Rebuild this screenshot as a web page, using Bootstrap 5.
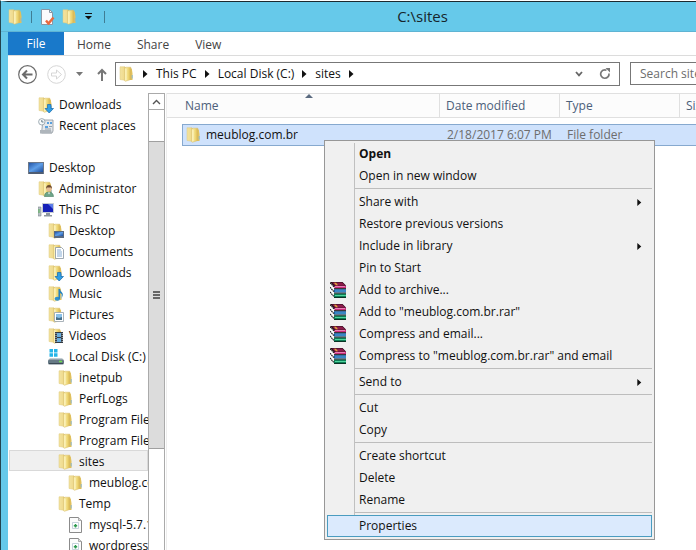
<!DOCTYPE html>
<html lang="en">
<head>
<meta charset="utf-8">
<meta name="viewport" content="width=device-width, initial-scale=1">
<title>C:\sites</title>
<link href="https://cdn.jsdelivr.net/npm/bootstrap@5.3.0/dist/css/bootstrap.min.css" rel="stylesheet">
<style>
  body { font-family: "Open Sans", "Noto Sans", sans-serif; font-size: 12px; line-height: 20px; color: #111; background: #fff; }
  a { color: inherit; text-decoration: none; }
  svg { flex: none; display: block; }
  .explorer { border-top: 1px solid #fff; border-left: 1px solid #23444f; }
  .frame { border-top: 1px solid #1d2a30; border-left: 7px solid #66c9ea; min-height: 0; }
  .titlebar { height: 30px; background: #66c9ea; border-bottom: 1px solid #5fb4d3; margin-left: -7px; padding-left: 7px; }
  .titlebar h1 { font-size: 15px; line-height: 28px; padding-left: 44px; color: #16252b; }
  .qa { height: 29px; width: 97px; gap: 7px; }
  .qa button, .plain { border: 0; background: none; padding: 0; }
  .vbar { width: 1px; height: 12px; background: #3f7d94; }
  .ribbon { height: 24px; border-bottom: 1px solid #dcdcdc; color: #444; }
  .ribbon a { padding: 3px 13px 0; }
  .ribbon .file-tab { background: #1979ca; color: #fff; width: 56px; padding: 2px 0 0; text-align: center; }
  .addr-row { height: 37px; padding: 6px 0 7px 10px; }
  .nav-buttons { gap: 10px; }
  .crumbs { border: 1px solid #777; height: 24px; color: #111; padding-left: 3px; }
  .search-box { border: 1px solid #777; border-right: 0; width: 66px; height: 23px; padding: 0 0 0 9px; margin-left: 10px; color: #6d6d6d; border-radius: 0; outline: 0; }
  .search-box::placeholder { color: #6d6d6d; }
  .side { width: 140px; overflow: hidden; }
  .side a { height: 21px; gap: 5px; white-space: nowrap; border: 1px solid transparent; margin-left: 1px; padding-top: 2px; }
  .side .gap-row { height: 21px; }
  .lv1 { padding-left: 18px; } .lv2 { padding-left: 28px; } .lv3 { padding-left: 38px; }
  .lv4 { padding-left: 48px; } .lv5 { padding-left: 58px; }
  .side a.current { background: #f0f0f0; border-color: #d9d9d9; }
  .scroller { width: 17px; border-left: 1px solid #aaa; border-right: 1px solid #aaa; }
  .scroller button { height: 17px; border: solid #aaa; border-width: 1px 0; background: #fff; padding: 0; }
  .track-top { flex: 7 0 0; } .track-end { flex: 23 0 0; }
  .thumb { flex: 70 0 0; background: #dcdcdc; border: solid #a0a0a0; border-width: 1px 0; }
  .files-pane { border-left: 1px solid #ededed; margin-left: 1px; }
  .files { table-layout: fixed; width: 610px; border-collapse: separate; border-spacing: 0; }
  .files th { font-weight: 400; color: #4c607a; height: 25px; padding: 1px 6px 0; border: solid #e0e0e0; border-width: 1px 1px 1px 0; background: #fcfcfc; }
  .files th:first-child { padding-left: 18px; }
  .files tbody::before { content: ""; display: block; height: 6px; }
  .files td { height: 22px; padding: 0 7px; color: #6d6d6d; line-height: 20px; white-space: nowrap; }
  .files td.chosen { background: #cfe2fc; border: solid #86a9cf; border-width: 1px 0; }
  .files td.name { border-left-width: 1px; color: #111; padding-left: 3px; }
  .c-pad { width: 15px; } .c-name { width: 258px; } .c-col { width: 120px; }
  .sort { position: absolute; left: 138px; top: 1px; }
  .ctx { position: absolute; left: 324px; top: 140px; width: 331px; background: #f0f0f0; border: 1px solid #979797; padding: 2px; }
  .ctx ul { background: linear-gradient(#c0c0c0, #c0c0c0) 27px 0 / 1px 100% no-repeat; }
  .ctx a { height: 22px; padding-right: 9px; border: 1px solid transparent; color: #111; }
  .ctx .slot { width: 31px; padding-left: 2px; flex: none; }
  .ctx .rule { height: 4px; margin-left: 28px; background: linear-gradient(#bdbdbd, #bdbdbd) 0 1px / 100% 1px no-repeat; }
  .ctx a.hot { background: #dbeafd; border-color: #4a9cc0; }
</style>
</head>
<body class="vh-100 overflow-hidden position-relative">
<svg width="0" height="0" class="position-absolute" aria-hidden="true">
  <defs>
    <linearGradient id="ga" x1="0" x2="1"><stop offset="0" stop-color="#f3e3a0"/><stop offset=".6" stop-color="#f0dc90"/><stop offset="1" stop-color="#cfb052"/></linearGradient>
    <linearGradient id="gb" x1="0" x2="1"><stop offset="0" stop-color="#fbf2b8"/><stop offset=".6" stop-color="#efd877"/><stop offset="1" stop-color="#d9b54e"/></linearGradient>
    <linearGradient id="gc" x1="0" x2="1" y2="1"><stop offset="0" stop-color="#2456a8"/><stop offset=".5" stop-color="#5f9fe8"/><stop offset="1" stop-color="#1c4c9c"/></linearGradient>
    <symbol id="folder" viewBox="0 0 16 16">
      <path d="M1 .8h5l1 1V14.500L1 13.500z" fill="url(#ga)" stroke="#dfc97e" stroke-width=".5"/>
      <path d="M11 2.500h1.800l.7 5V14h-3z" fill="#e2c15c"/>
      <path d="M5.500 2.200l1.700-1H11.800V13.500L6.500 15.300l-1-.6z" fill="url(#gb)" stroke="#d9bd68" stroke-width=".5"/>
      <path d="M7 3v11" stroke="#fff6c8" stroke-width=".8"/>
      <path d="M13.200 9v3.500" stroke="#8fb8cc" stroke-width="1"/>
    </symbol>
    <symbol id="down" viewBox="0 0 16 16"><use href="#folder"/><path d="M9.500 7.500h3.500v4h2.500L11.200 16 7 11.500h2.500z" fill="#2f9fe6" stroke="#1769ae" stroke-width=".7"/></symbol>
    <symbol id="recent" viewBox="0 0 16 16"><path d="M5 2h10v11l-1 2H3.500z" fill="#e4e8ec" stroke="#8a939b" stroke-width=".8"/><path d="M2 12h11l1 3.500H2z" fill="#aeb5bb"/><path d="M9 4h2v2H9zM12 4h2v2h-2zM7 8h3v2H7z" fill="#58a0de"/><path d="M11 8.500h3M7 11h6" stroke="#7d8f9e" stroke-width=".8"/><circle cx="3.800" cy="3.800" r="3.200" fill="#f7fafb" stroke="#8b9aa3" stroke-width=".8"/><path d="M3.800 2v2h1.700" stroke="#46606e" stroke-width=".8" fill="none"/></symbol>
    <symbol id="desktop" viewBox="0 0 16 16"><path d="M0 2h16v12H0z" fill="#6b7788"/><path d="M1 3h14v9H1z" fill="url(#gc)"/><path d="M1 12.500h14v1H1z" fill="#34455e"/></symbol>
    <symbol id="user" viewBox="0 0 16 16"><use href="#folder"/><path d="M6.500 15.500q0-4.500 4.300-4.500t4.700 4.500z" fill="#6ea58a" stroke="#487d62" stroke-width=".6"/><circle cx="11" cy="7.800" r="2.700" fill="#e5bb94"/><path d="M8 8q0-4 3-4t3 4l-1-1.500H9z" fill="#6c4a30"/><path d="M10 11.500l1 2 1-2z" fill="#fff"/></symbol>
    <symbol id="pc" viewBox="0 0 16 16"><path d="M0 5h3v9H0z" fill="#b9c1c6" stroke="#78838a" stroke-width=".6"/><path d="M1 7v4" stroke="#52b052"/><path d="M4 1h12v10H4z" fill="#c6ccd4"/><path d="M5 2h10v8H5z" fill="#1620b8"/><path d="M10 2h5v5z" fill="#5c7ce8"/><path d="M8 11h4v2h2v1.500H6V13h2z" fill="#8e979f"/></symbol>
    <symbol id="fdesk" viewBox="0 0 16 16"><use href="#folder"/><path d="M6 8h10v7H6z" fill="#5a6a80"/><path d="M7 9h8v4H7z" fill="url(#gc)"/></symbol>
    <symbol id="fdoc" viewBox="0 0 16 16"><use href="#folder"/><path d="M7.500 3.500h6l2 2v9h-8z" fill="#fff" stroke="#8793a0" stroke-width=".8"/><path d="M9 6h4M9 8h5M9 10h5M9 12h5" stroke="#6798c9" stroke-width=".8"/></symbol>
    <symbol id="fmus" viewBox="0 0 16 16"><use href="#folder"/><ellipse cx="9.300" cy="12.800" rx="2.700" ry="2" fill="#2f91cf"/><path d="M10.500 3h1.500q.3 2 2 3.500t0 5q.7-3.500-2-4.500v6h-1.500z" fill="#2382c3"/></symbol>
    <symbol id="fpic" viewBox="0 0 16 16"><use href="#folder"/><path d="M6.500 5.500h9v9h-9z" fill="#fff" stroke="#94a0a8" stroke-width=".8"/><path d="M8 7h6v6H8z" fill="#89c1ea"/><path d="M8 10l3 1 3-1v3H8z" fill="#47718c"/></symbol>
    <symbol id="fvid" viewBox="0 0 16 16"><use href="#folder"/><path d="M7 4h8v11H7z" fill="#333c45"/><path d="M9 5h4v4H9zM9 10h4v4H9z" fill="#69aede"/><path d="M8 5v10M14.200 5v10" stroke="#e5e5e5" stroke-width=".9" stroke-dasharray="1 1"/></symbol>
    <symbol id="disk" viewBox="0 0 16 16"><path d="M1.500 0h3.500v3.500H1.500zM6 0h3.500v3.500H6zM1.500 4.300h3.500v3.500H1.500zM6 4.300h3.500v3.500H6z" fill="#25b5e8"/><path d="M2 9h12l2 2H0z" fill="#c3cdd2"/><rect y="10.500" width="16" height="5" rx="1.500" fill="#667985"/><path d="M1 14.500h14" stroke="#3b4a54"/><path d="M11 12.500h3" stroke="#6ee04d" stroke-width="1.500"/></symbol>
    <symbol id="filei" viewBox="0 0 16 16"><path d="M1.500.5h9l3 3v12h-12z" fill="#fcfcfc" stroke="#8b8b8b"/><path d="M10.500.5v3h3" fill="#ddd" stroke="#999" stroke-width=".8"/><path d="M4.500 5.500h6v6h-6z" fill="#fff" stroke="#b7c8d4" stroke-width=".8"/><path d="M7.500 7v3.400M5.800 8.700h3.400" stroke="#2d9a4f" stroke-width="1.500"/></symbol>
    <symbol id="rar" viewBox="0 0 16 16">
      <path d="M0 1l3.500 4.500V16L0 12z" fill="#fff"/>
      <path d="M0 .8l4 4M0 5.200l4 4.600M0 10l4 4.800" stroke="#222" stroke-width="1.200" stroke-dasharray="1.600 .5"/>
      <path d="M0 0h12.500L16 3.500v1L4.500 5z" fill="#2a0a18"/>
      <path d="M2 .5h10L15.500 3.600H5z" fill="#8c1b4b"/><path d="M4 .8h2l2 2.400H6z" fill="#e3a637"/>
      <path d="M4.500 3.800H16v2.400H4.500z" fill="#c92c7b"/><path d="M5 4.500h10" stroke="#f3a3cd" stroke-width=".7"/>
      <path d="M4 6.200h12v1H4z" fill="#111"/>
      <path d="M4 7.200h12v3.300H4z" fill="#175aa0"/><path d="M5 9h11" stroke="#5db4e8" stroke-width="1"/>
      <path d="M4 10.700h12v1H4z" fill="#111"/>
      <path d="M4 11.700h12V15H4z" fill="#0d7c55"/><path d="M5 13.500h11" stroke="#4fd49d" stroke-width="1"/>
      <path d="M4 15h12v1H4z" fill="#0b3325"/>
    </symbol>
    <symbol id="tri" viewBox="0 0 5 8"><path d="M0 0l4.500 4L0 8z" fill="#111"/></symbol>
  </defs>
</svg>

<main class="explorer h-100">
<div class="frame h-100 d-flex flex-column">
  <header class="titlebar d-flex">
    <div class="qa d-flex align-items-center">
      <svg width="16" height="16"><use href="#folder"/></svg>
      <span class="vbar"></span>
      <button aria-label="Properties"><svg width="16" height="16" viewBox="0 0 16 16"><path d="M2.500.5h8l3 3v12h-11z" fill="#fbfbfd" stroke="#8a97a5"/><path d="M10.500.5v3h3" fill="none" stroke="#8a97a5"/><path d="M7 11.500l2.500 3 5-6" fill="none" stroke="#e8693f" stroke-width="2.500"/></svg></button>
      <button aria-label="New folder"><svg width="16" height="16"><use href="#folder"/></svg></button>
      <button aria-label="Customize toolbar"><svg width="7" height="7" viewBox="0 0 7 7"><path d="M0 .5h7" stroke="#111"/><path d="M0 3h7L3.500 6.500z" fill="#111"/></svg></button>
      <span class="vbar ms-auto"></span>
    </div>
    <h1 class="flex-grow-1 text-center fw-normal m-0">C:\sites</h1>
  </header>

  <nav class="ribbon d-flex" aria-label="Ribbon">
    <a href="#" class="file-tab">File</a><a href="#">Home</a><a href="#">Share</a><a href="#">View</a>
  </nav>

  <div class="addr-row d-flex align-items-start">
    <div class="nav-buttons d-flex align-items-center h-100">
      <button class="plain" aria-label="Back"><svg width="19" height="19" viewBox="0 0 19 19" fill="none" stroke="#6b6b6b"><circle cx="9.500" cy="9.500" r="8.800" stroke-width="1.200"/><path d="M14.500 9.500H5M9 5.500L5 9.500l4 4" stroke-width="2"/></svg></button>
      <button class="plain" aria-label="Forward"><svg width="19" height="19" viewBox="0 0 19 19" fill="none" stroke="#d6d6d6"><circle cx="9.500" cy="9.500" r="8.800"/><path d="M4.500 8h5V5l5 4.500-5 4.500v-3h-5z"/></svg></button>
      <button class="plain" aria-label="Recent locations"><svg width="7" height="4" viewBox="0 0 7 4"><path d="M0 0h7L3.500 4z" fill="#777"/></svg></button>
      <button class="plain ms-1" aria-label="Up"><svg width="10" height="13" viewBox="0 0 10 13" fill="none" stroke="#777" stroke-width="2"><path d="M5 13V2M1 6l4-4 4 4"/></svg></button>
    </div>
    <div class="crumbs flex-grow-1 d-flex align-items-center ms-2">
      <svg width="16" height="16"><use href="#folder"/></svg>
      <svg class="ms-2 me-2" width="5" height="8"><use href="#tri"/></svg>
      <a href="#">This PC</a>
      <svg class="ms-2 me-2" width="5" height="8"><use href="#tri"/></svg>
      <a href="#">Local Disk (C:)</a>
      <svg class="ms-2 me-2" width="5" height="8"><use href="#tri"/></svg>
      <a href="#">sites</a>
      <svg class="ms-2" width="5" height="8"><use href="#tri"/></svg>
      <button class="plain ms-auto" aria-label="Previous locations"><svg width="8" height="6" viewBox="0 0 8 6"><path d="M1 1l3 3.300L7 1" fill="none" stroke="#666" stroke-width="1.800"/></svg></button>
      <button class="plain ms-3 me-1" aria-label="Refresh"><svg class="me-1" width="12" height="12" viewBox="0 0 12 12"><path d="M7.500 2.200A4.200 4.200 0 1 0 10 5.500" fill="none" stroke="#777" stroke-width="1.700"/><path d="M6.500 0h4.500v4.500z" fill="#777"/></svg></button>
    </div>
    <input class="search-box" type="text" aria-label="Search sites" placeholder="Search sites">
  </div>

  <div class="d-flex flex-grow-1 overflow-hidden">
    <nav class="side flex-shrink-0" aria-label="Folders">
      <a href="#" class="d-flex align-items-center lv2"><svg width="16" height="16"><use href="#down"/></svg>Downloads</a>
      <a href="#" class="d-flex align-items-center lv2"><svg width="16" height="16"><use href="#recent"/></svg>Recent places</a>
      <div class="gap-row"></div>
      <a href="#" class="d-flex align-items-center lv1"><svg width="16" height="16"><use href="#desktop"/></svg>Desktop</a>
      <a href="#" class="d-flex align-items-center lv2"><svg width="16" height="16"><use href="#user"/></svg>Administrator</a>
      <a href="#" class="d-flex align-items-center lv2"><svg width="16" height="16"><use href="#pc"/></svg>This PC</a>
      <a href="#" class="d-flex align-items-center lv3"><svg width="16" height="16"><use href="#fdesk"/></svg>Desktop</a>
      <a href="#" class="d-flex align-items-center lv3"><svg width="16" height="16"><use href="#fdoc"/></svg>Documents</a>
      <a href="#" class="d-flex align-items-center lv3"><svg width="16" height="16"><use href="#down"/></svg>Downloads</a>
      <a href="#" class="d-flex align-items-center lv3"><svg width="16" height="16"><use href="#fmus"/></svg>Music</a>
      <a href="#" class="d-flex align-items-center lv3"><svg width="16" height="16"><use href="#fpic"/></svg>Pictures</a>
      <a href="#" class="d-flex align-items-center lv3"><svg width="16" height="16"><use href="#fvid"/></svg>Videos</a>
      <a href="#" class="d-flex align-items-center lv3"><svg width="16" height="16"><use href="#disk"/></svg>Local Disk (C:)</a>
      <a href="#" class="d-flex align-items-center lv4"><svg width="16" height="16"><use href="#folder"/></svg>inetpub</a>
      <a href="#" class="d-flex align-items-center lv4"><svg width="16" height="16"><use href="#folder"/></svg>PerfLogs</a>
      <a href="#" class="d-flex align-items-center lv4"><svg width="16" height="16"><use href="#folder"/></svg>Program Files</a>
      <a href="#" class="d-flex align-items-center lv4"><svg width="16" height="16"><use href="#folder"/></svg>Program Files</a>
      <a href="#" class="d-flex align-items-center lv4 current"><svg width="16" height="16"><use href="#folder"/></svg>sites</a>
      <a href="#" class="d-flex align-items-center lv5"><svg width="16" height="16"><use href="#folder"/></svg>meublog.com</a>
      <a href="#" class="d-flex align-items-center lv4"><svg width="16" height="16"><use href="#folder"/></svg>Temp</a>
      <a href="#" class="d-flex align-items-center lv5"><svg width="16" height="16"><use href="#filei"/></svg>mysql-5.7.1</a>
      <a href="#" class="d-flex align-items-center lv5"><svg width="16" height="16"><use href="#filei"/></svg>wordpress-</a>
    </nav>
    <div class="scroller d-flex flex-column flex-shrink-0">
      <button aria-label="Scroll up"><svg class="mx-auto" width="9" height="6" viewBox="0 0 9 6"><path d="M1 5l3.500-3.500L8 5" fill="none" stroke="#555" stroke-width="1.400"/></svg></button>
      <div class="track-top"></div>
      <div class="thumb d-flex align-items-center justify-content-center"><svg width="7" height="8" viewBox="0 0 7 8"><path d="M0 1h7M0 4h7M0 7h7" stroke="#666" stroke-width="2"/></svg></div>
      <div class="track-end"></div>
    </div>
    <section class="files-pane flex-grow-1 overflow-hidden position-relative">
      <svg class="sort" width="8" height="4" viewBox="0 0 8 4"><path d="M0 4l4-4 4 4z" fill="#5b6b80"/></svg>
      <table class="files">
        <colgroup><col class="c-pad"><col class="c-name"><col class="c-col"><col class="c-col"><col></colgroup>
        <thead><tr><th colspan="2">Name</th><th>Date modified</th><th>Type</th><th>Size</th></tr></thead>
        <tbody><tr>
          <td class="p-0"></td>
          <td class="chosen name"><span class="d-flex align-items-center gap-1"><svg width="16" height="16"><use href="#folder"/></svg>meublog.com.br</span></td>
          <td class="chosen">2/18/2017 6:07 PM</td><td class="chosen">File folder</td><td class="chosen"></td>
        </tr></tbody>
      </table>
    </section>
  </div>
</div>
</main>

<div class="ctx">
  <ul class="list-unstyled m-0">
    <li><a href="#" class="d-flex align-items-center fw-bold"><span class="slot"></span>Open</a></li>
    <li><a href="#" class="d-flex align-items-center"><span class="slot"></span>Open in new window</a></li>
    <li class="rule"></li>
    <li><a href="#" class="d-flex align-items-center"><span class="slot"></span>Share with<svg class="ms-auto" width="5" height="7"><use href="#tri"/></svg></a></li>
    <li><a href="#" class="d-flex align-items-center"><span class="slot"></span>Restore previous versions</a></li>
    <li><a href="#" class="d-flex align-items-center"><span class="slot"></span>Include in library<svg class="ms-auto" width="5" height="7"><use href="#tri"/></svg></a></li>
    <li><a href="#" class="d-flex align-items-center"><span class="slot"></span>Pin to Start</a></li>
    <li><a href="#" class="d-flex align-items-center"><span class="slot"><svg width="16" height="16"><use href="#rar"/></svg></span>Add to archive...</a></li>
    <li><a href="#" class="d-flex align-items-center"><span class="slot"><svg width="16" height="16"><use href="#rar"/></svg></span>Add to "meublog.com.br.rar"</a></li>
    <li><a href="#" class="d-flex align-items-center"><span class="slot"><svg width="16" height="16"><use href="#rar"/></svg></span>Compress and email...</a></li>
    <li><a href="#" class="d-flex align-items-center"><span class="slot"><svg width="16" height="16"><use href="#rar"/></svg></span>Compress to "meublog.com.br.rar" and email</a></li>
    <li class="rule"></li>
    <li><a href="#" class="d-flex align-items-center"><span class="slot"></span>Send to<svg class="ms-auto" width="5" height="7"><use href="#tri"/></svg></a></li>
    <li class="rule"></li>
    <li><a href="#" class="d-flex align-items-center"><span class="slot"></span>Cut</a></li>
    <li><a href="#" class="d-flex align-items-center"><span class="slot"></span>Copy</a></li>
    <li class="rule"></li>
    <li><a href="#" class="d-flex align-items-center"><span class="slot"></span>Create shortcut</a></li>
    <li><a href="#" class="d-flex align-items-center"><span class="slot"></span>Delete</a></li>
    <li><a href="#" class="d-flex align-items-center"><span class="slot"></span>Rename</a></li>
    <li class="rule"></li>
    <li><a href="#" class="d-flex align-items-center hot"><span class="slot"></span>Properties</a></li>
  </ul>
</div>
<script src="https://cdn.jsdelivr.net/npm/bootstrap@5.3.0/dist/js/bootstrap.bundle.min.js"></script>
</body>
</html>
